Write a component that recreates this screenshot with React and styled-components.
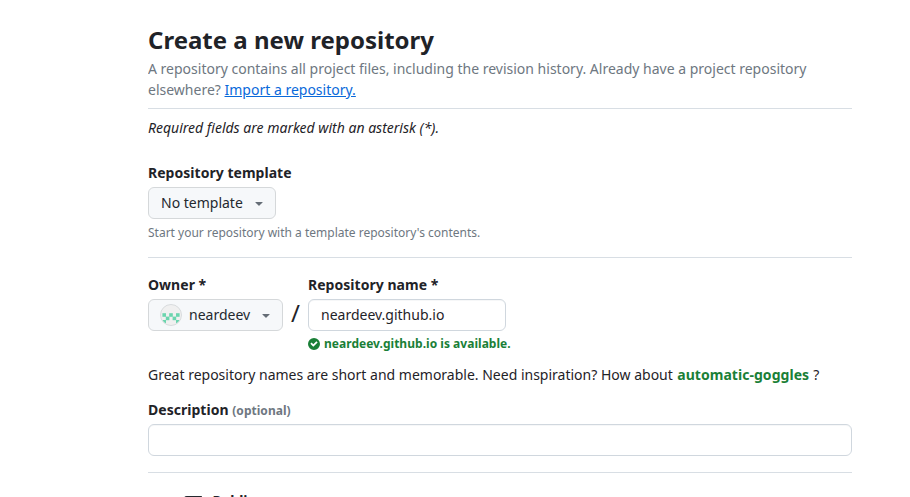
import React from "react";
import styled, { createGlobalStyle } from "styled-components";

const GlobalStyle = createGlobalStyle`
  * { box-sizing: border-box; }
  html, body { margin: 0; overflow: hidden; background: #fff; }
  body {
    font-family: "Noto Sans", sans-serif;
    font-size: 14px;
    line-height: 21px;
    color: #1f2328;
  }
`;

const Page = styled.main`
  width: 704px;
  height: 497px;
  margin-left: 148px;
  padding-top: 22px;
  overflow: hidden;
`;

const Title = styled.h1`
  margin: 0;
  font-size: 24px;
  line-height: 36px;
  font-weight: 700;
`;

const Subtitle = styled.p`
  margin: 0;
  color: #6e7781;
`;

const Link = styled.a`
  color: #0969da;
  text-decoration: underline;
`;

const Divider = styled.hr`
  height: 1px;
  margin: ${({ $top }) => $top}px 0 0;
  border: 0;
  background: #d8dee4;
`;

const Required = styled.p`
  margin: 8px 0 24px;
  font-style: italic;
`;

const Label = styled.label`
  display: block;
  height: 21px;
  margin-bottom: 4px;
  font-weight: 700;
  letter-spacing: 0.03px;
`;

const Optional = styled.span`
  font-size: 12px;
  color: #6e7781;
`;

const SelectButton = styled.button`
  display: flex;
  align-items: center;
  width: ${({ $width }) => $width}px;
  height: 32px;
  padding: 0 11px 0 ${({ $left }) => $left}px;
  border: 1px solid #d5d8da;
  border-radius: 6px;
  background: #f6f8fa;
  color: #24292f;
  font: inherit;
  line-height: 20px;
  white-space: nowrap;
`;

const Caret = styled.svg`
  width: 16px;
  height: 16px;
  margin-left: auto;
  margin-right: -3px;
  fill: #656d76;
`;

const Hint = styled.p`
  margin: 5px 0 0;
  font-size: 12px;
  line-height: 18px;
  color: #6e7781;
`;

const OwnerRow = styled.div`
  display: flex;
  align-items: flex-start;
  margin-top: 16px;
`;

const Field = styled.div`
  margin-top: ${({ $top }) => $top || 0}px;
`;

const Slash = styled.span`
  width: 25px;
  padding-top: 22px;
  font-size: 24px;
  line-height: 34px;
  text-align: center;
`;

const Avatar = styled.svg`
  width: 22px;
  height: 22px;
  margin-right: 7px;
`;

const Input = styled.input`
  display: block;
  width: ${({ $width }) => $width};
  height: 32px;
  padding: 0 12px 1px;
  border: 1px solid #d0d7de;
  border-radius: 6px;
  background: #fff;
  color: #1f2328;
  font: inherit;
  line-height: 20px;
  box-shadow: inset 0 1px 0 rgba(208, 215, 222, 0.2);
  outline: 0;
`;

const Status = styled.div`
  display: flex;
  align-items: center;
  gap: 4px;
  margin-top: 4px;
  font-size: 12px;
  line-height: 18px;
  font-weight: 700;
  letter-spacing: 0.025px;
  color: #1a7f37;
  white-space: nowrap;
`;

const StatusIcon = styled.svg`
  width: 12px;
  height: 12px;
  fill: currentColor;
`;

const Inspiration = styled.p`
  margin: 11px 0 0;
  white-space: nowrap;
`;

const Suggestion = styled.strong`
  margin: 0 0.5px 0 0.8px;
  font-weight: 700;
  letter-spacing: 0.04px;
  color: #1a7f37;
`;

const VisibilityRow = styled.div`
  display: flex;
  gap: 8px;
  margin-top: 16px;
  padding-left: 33px;
`;

const RepoIcon = styled.svg`
  width: 24px;
  height: 24px;
  margin-top: 7px;
  fill: #24292f;
`;

const VisibilityName = styled.span`
  margin-left: -0.5px;
  padding-top: 1px;
  font-weight: 700;
`;

const cells = [[0, 0], [2, 0], [4, 0], [1, 1], [3, 1], [0, 2], [4, 2]];

const DropCaret = () => (
  <Caret viewBox="0 0 16 16">
    <path d="m4.427 7.427 3.396 3.396a.25.25 0 0 0 .354 0l3.396-3.396A.25.25 0 0 0 11.396 7H4.604a.25.25 0 0 0-.177.427Z" />
  </Caret>
);

const Identicon = () => (
  <Avatar viewBox="0 0 22 22">
    <clipPath id="avatar-clip">
      <circle cx="11" cy="11" r="10" />
    </clipPath>
    <circle cx="11" cy="11" r="10.5" fill="#f0f0f0" stroke="#d8dbdd" />
    <g clipPath="url(#avatar-clip)" fill="#6bd5ae">
      {cells.map(([x, y]) => (
        <rect key={`${x}-${y}`} x={2.4 + x * 3.4} y={9.2 + y * 3.4} width="3.6" height="3.6" />
      ))}
    </g>
  </Avatar>
);

export default function App() {
  return (
    <>
      <GlobalStyle />
      <Page>
        <Title>Create a new repository</Title>
        <Subtitle>
          A repository contains all project files, including the revision history. Already have a project repository
          elsewhere? <Link>Import a repository.</Link>
        </Subtitle>
        <Divider $top={8} />
        <Required>Required fields are marked with an asterisk (*).</Required>
        <Label>Repository template</Label>
        <SelectButton $width={128} $left={12}>
          No template
          <DropCaret />
        </SelectButton>
        <Hint>Start your repository with a template repository's contents.</Hint>
        <Divider $top={15} />
        <OwnerRow>
          <Field>
            <Label>Owner *</Label>
            <SelectButton $width={135} $left={11}>
              <Identicon />
              neardeev
              <DropCaret />
            </SelectButton>
          </Field>
          <Slash>/</Slash>
          <Field>
            <Label>Repository name *</Label>
            <Input $width="198px" defaultValue="neardeev.github.io" />
            <Status>
              <StatusIcon viewBox="0 0 12 12">
                <path d="M6 0a6 6 0 1 1 0 12A6 6 0 0 1 6 0Zm-.705 8.737L9.63 4.403 8.392 3.166 5.295 6.263l-1.7-1.702L2.356 5.8l2.938 2.938Z" />
              </StatusIcon>
              neardeev.github.io is available.
            </Status>
          </Field>
        </OwnerRow>
        <Inspiration>
          Great repository names are short and memorable. Need inspiration? How about{" "}
          <Suggestion>automatic-goggles</Suggestion> ?
        </Inspiration>
        <Field $top={14}>
          <Label>
            Description <Optional>(optional)</Optional>
          </Label>
          <Input $width="100%" />
        </Field>
        <Divider $top={16} />
        <VisibilityRow>
          <RepoIcon viewBox="0 0 24 24">
            <path d="M3 2.75A2.75 2.75 0 0 1 5.75 0h14.5a.75.75 0 0 1 .75.75v20.5a.75.75 0 0 1-.75.75h-6a.75.75 0 0 1 0-1.5h5.25v-4H6A1.5 1.5 0 0 0 4.5 18v.75c0 .716.43 1.334 1.05 1.605a.75.75 0 0 1-.6 1.374A3.25 3.25 0 0 1 3 18.75ZM19.5 1.5H5.75c-.69 0-1.25.56-1.25 1.25v12.651A2.989 2.989 0 0 1 6 15h13.5Z" />
          </RepoIcon>
          <VisibilityName>Public</VisibilityName>
        </VisibilityRow>
      </Page>
    </>
  );
}
